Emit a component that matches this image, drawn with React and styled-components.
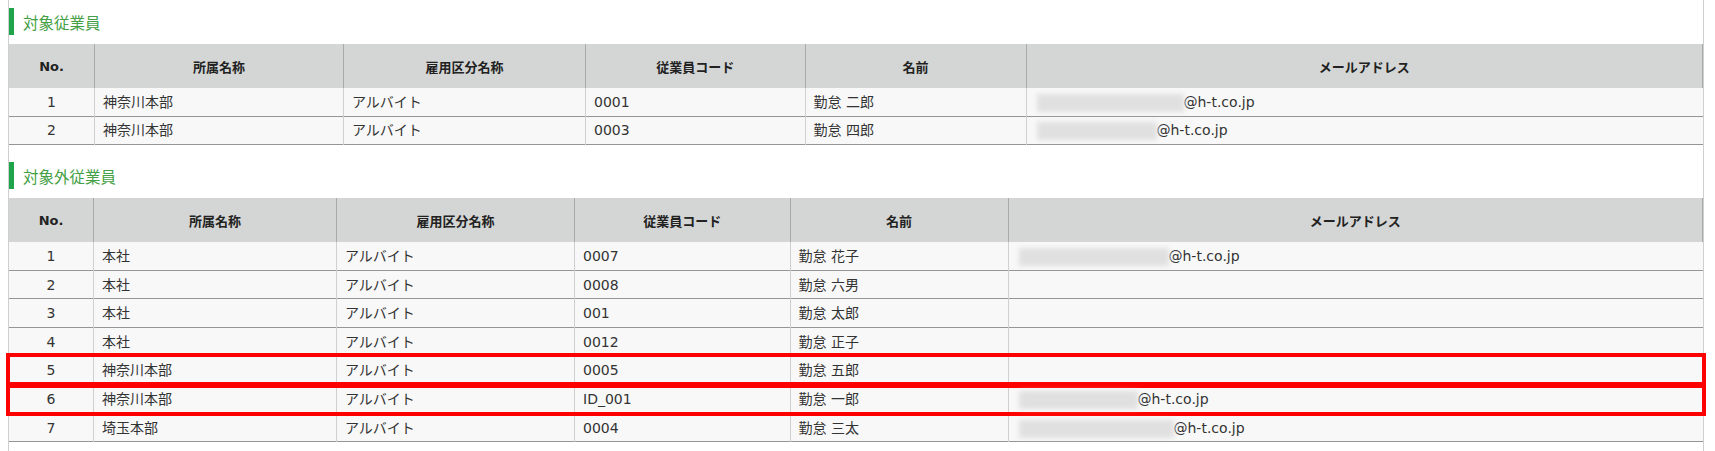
import React from 'react';
import styled, { createGlobalStyle } from 'styled-components';

const GlobalStyle = createGlobalStyle`
  html, body {
    margin: 0;
    padding: 0;
    background: #fff;
  }
  body {
    font-family: "DejaVu Sans", "Noto Sans CJK JP", sans-serif;
    color: #333;
  }
`;

const columns = ['No.', '所属名称', '雇用区分名称', '従業員コード', '名前', 'メールアドレス'];

const targetEmployees = {
  widths: [85.5, 249, 242, 219.5, 221],
  rows: [
    { no: 1, dept: '神奈川本部', type: 'アルバイト', code: '0001', name: '勤怠 二郎', mask: 147 },
    { no: 2, dept: '神奈川本部', type: 'アルバイト', code: '0003', name: '勤怠 四郎', mask: 120 },
  ],
};

const otherEmployees = {
  widths: [84.5, 243, 238, 215.5, 218],
  rows: [
    { no: 1, dept: '本社', type: 'アルバイト', code: '0007', name: '勤怠 花子', mask: 150 },
    { no: 2, dept: '本社', type: 'アルバイト', code: '0008', name: '勤怠 六男' },
    { no: 3, dept: '本社', type: 'アルバイト', code: '001', name: '勤怠 太郎' },
    { no: 4, dept: '本社', type: 'アルバイト', code: '0012', name: '勤怠 正子' },
    { no: 5, dept: '神奈川本部', type: 'アルバイト', code: '0005', name: '勤怠 五郎', marked: true },
    { no: 6, dept: '神奈川本部', type: 'アルバイト', code: 'ID_001', name: '勤怠 一郎', mask: 119, marked: true },
    { no: 7, dept: '埼玉本部', type: 'アルバイト', code: '0004', name: '勤怠 三太', mask: 155 },
  ],
};

const EmployeeTable = ({ data }) => (
  <Table>
    <colgroup>
      {data.widths.map((w, i) => (
        <col key={i} style={{ width: `${w}px` }} />
      ))}
      <col />
    </colgroup>
    <thead>
      <tr>
        {columns.map((c) => (
          <Th key={c}>{c}</Th>
        ))}
      </tr>
    </thead>
    <tbody>
      {data.rows.map((row) => (
        <Row key={row.no} $marked={row.marked}>
          <Td $center>{row.no}</Td>
          <Td>{row.dept}</Td>
          <Td>{row.type}</Td>
          <Td>{row.code}</Td>
          <Td>{row.name}</Td>
          <Td>
            {row.mask && (
              <>
                <Masked style={{ width: `${row.mask}px` }} />
                @h-t.co.jp
              </>
            )}
          </Td>
        </Row>
      ))}
    </tbody>
  </Table>
);

const App = () => (
  <>
    <GlobalStyle />
    <Page>
      <Section>
        <Heading>対象従業員</Heading>
        <EmployeeTable data={targetEmployees} />
      </Section>
      <Section>
        <Heading>対象外従業員</Heading>
        <EmployeeTable data={otherEmployees} />
      </Section>
    </Page>
  </>
);

export default App;

const Page = styled.div`
  box-sizing: border-box;
  width: 1696px;
  min-height: 100vh;
  margin-left: 8px;
  border-left: 1px solid #cfcfcf;
  border-right: 1px solid #cfcfcf;
`;

const Section = styled.section`
  & + & {
    margin-top: 9px;
  }
`;

const Heading = styled.h2`
  box-sizing: border-box;
  margin: 0;
  padding: 8px 0 9px;
  display: flex;
  align-items: center;
  font-family: "Noto Sans CJK JP", sans-serif;
  font-size: 15.5px;
  font-weight: 400;
  color: #45a045;

  &::before {
    content: '';
    width: 5px;
    height: 27px;
    margin-right: 9px;
    background: #1fa34b;
  }
`;

const Table = styled.table`
  width: 100%;
  table-layout: fixed;
  border-collapse: collapse;
  font-size: 14px;
`;

const Th = styled.th`
  height: 44px;
  padding: 0 8px;
  background: #d4d6d5;
  border-right: 1px solid #a9a9a9;
  font-size: 13px;
  font-weight: 700;
  color: #222;
  text-align: center;
`;

const Row = styled.tr`
  background: #f8f8f8;
  border-bottom: 1px solid #959595;
  outline: ${({ $marked }) => ($marked ? '4px solid #ff0000' : 'none')};
  outline-offset: -1px;
`;

const Td = styled.td`
  height: 27.6px;
  padding: 0 8px;
  border-right: 1px solid #d0d0d0;
  text-align: ${({ $center }) => ($center ? 'center' : 'left')};
  white-space: nowrap;
  line-height: 20px;

  &:last-child {
    border-right: none;
  }
`;

const Masked = styled.span`
  display: inline-block;
  height: 18px;
  margin-left: 2px;
  vertical-align: middle;
  background: #e0e0e0;
  filter: blur(2.5px);
`;
